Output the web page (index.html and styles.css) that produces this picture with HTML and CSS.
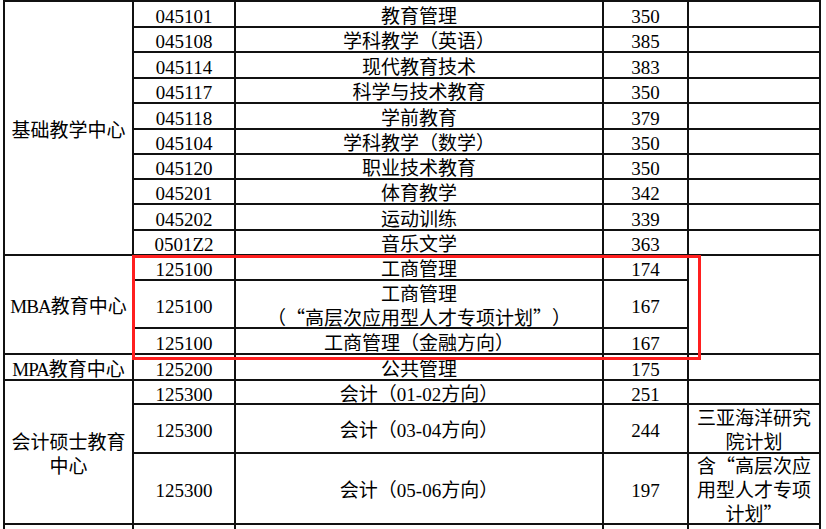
FILE: index.html
```html
<!DOCTYPE html>
<html lang="zh-CN">
<head>
<meta charset="utf-8">
<title>录取分数线</title>
<link rel="stylesheet" href="styles.css">
</head>
<body>
<div class="page">
  <div class="sheet">
    <div class="c col1 rs10">基础教学中心</div>
    <div class="c">045101</div><div class="c">教育管理</div><div class="c">350</div><div class="c"></div>
    <div class="c">045108</div><div class="c">学科教学（英语）</div><div class="c">385</div><div class="c"></div>
    <div class="c">045114</div><div class="c">现代教育技术</div><div class="c">383</div><div class="c"></div>
    <div class="c">045117</div><div class="c">科学与技术教育</div><div class="c">350</div><div class="c"></div>
    <div class="c">045118</div><div class="c">学前教育</div><div class="c">379</div><div class="c"></div>
    <div class="c">045104</div><div class="c">学科教学（数学）</div><div class="c">350</div><div class="c"></div>
    <div class="c">045120</div><div class="c">职业技术教育</div><div class="c">350</div><div class="c"></div>
    <div class="c">045201</div><div class="c">体育教学</div><div class="c">342</div><div class="c"></div>
    <div class="c">045202</div><div class="c">运动训练</div><div class="c">339</div><div class="c"></div>
    <div class="c">0501Z2</div><div class="c">音乐文学</div><div class="c">363</div><div class="c"></div>

    <div class="c col1 rs3"><span><span class="lat">MBA</span>教育中心</span></div>
    <div class="c">125100</div><div class="c">工商管理</div><div class="c">174</div><div class="c col5 rs3"></div>
    <div class="c">125100</div><div class="c"><span>工商管理<br>（<span class="q">“</span>高层次应用型人才专项计划<span class="q">”</span>）</span></div><div class="c">167</div>
    <div class="c">125100</div><div class="c">工商管理（金融方向）</div><div class="c">167</div>

    <div class="c col1"><span><span class="lat">MPA</span>教育中心</span></div>
    <div class="c">125200</div><div class="c">公共管理</div><div class="c">175</div><div class="c"></div>

    <div class="c col1 rs3">会计硕士教育中心</div>
    <div class="c">125300</div><div class="c">会计（01-02方向）</div><div class="c">251</div><div class="c"></div>
    <div class="c">125300</div><div class="c">会计（03-04方向）</div><div class="c">244</div><div class="c"><span>三亚海洋研究<br>院计划</span></div>
    <div class="c">125300</div><div class="c">会计（05-06方向）</div><div class="c">197</div><div class="c"><span>含<span class="q">“</span>高层次应<br>用型人才专项<br>计划<span class="q">”</span></span></div>

    <div class="c col1"></div><div class="c"></div><div class="c"></div><div class="c"></div><div class="c"></div>
  </div>
  <div class="mark"></div>
</div>
</body>
</html>
```

FILE: styles.css
```css
html, body {
  margin: 0;
  padding: 0;
  background: #fff;
}

body {
  width: 826px;
  height: 529px;
  overflow: hidden;
}

.page {
  position: relative;
  width: 826px;
  height: 529px;
  overflow: hidden;
}

.sheet {
  display: grid;
  grid-template-columns: 129px 102px 368px 85px 132px;
  grid-template-rows: 26px 25px 26px 25px 26px 25px 25px 25px 26px 25px 25px 48px 26px 26px 24px 49px 71px 40px;
  margin-left: 3px;
  width: 818px;
  box-sizing: border-box;
  border-top: 2px solid #111;
  border-left: 2px solid #111;
  font-family: "Liberation Serif", "Noto Sans CJK SC", serif;
  font-size: 19px;
  line-height: 24px;
  color: #000;
  text-spacing-trim: space-all;
}

.c {
  box-sizing: border-box;
  border-right: 2px solid #111;
  border-bottom: 2px solid #111;
  display: flex;
  align-items: center;
  justify-content: center;
  text-align: center;
  padding: 5px 3px 0;
  min-width: 0;
  white-space: normal;
}

.col1 {
  grid-column: 1;
}

.col5 {
  grid-column: 5;
}

.rs10 {
  grid-row: span 10;
}

.rs3 {
  grid-row: span 3;
}

.lat {
  letter-spacing: -1px;
}

.q {
  font-family: "Noto Sans CJK SC", sans-serif;
  font-feature-settings: "fwid";
  line-height: 1;
}

.mark {
  position: absolute;
  left: 132px;
  top: 255px;
  width: 569px;
  height: 105px;
  box-sizing: border-box;
  border: 3px solid #ff1f1f;
}
```
